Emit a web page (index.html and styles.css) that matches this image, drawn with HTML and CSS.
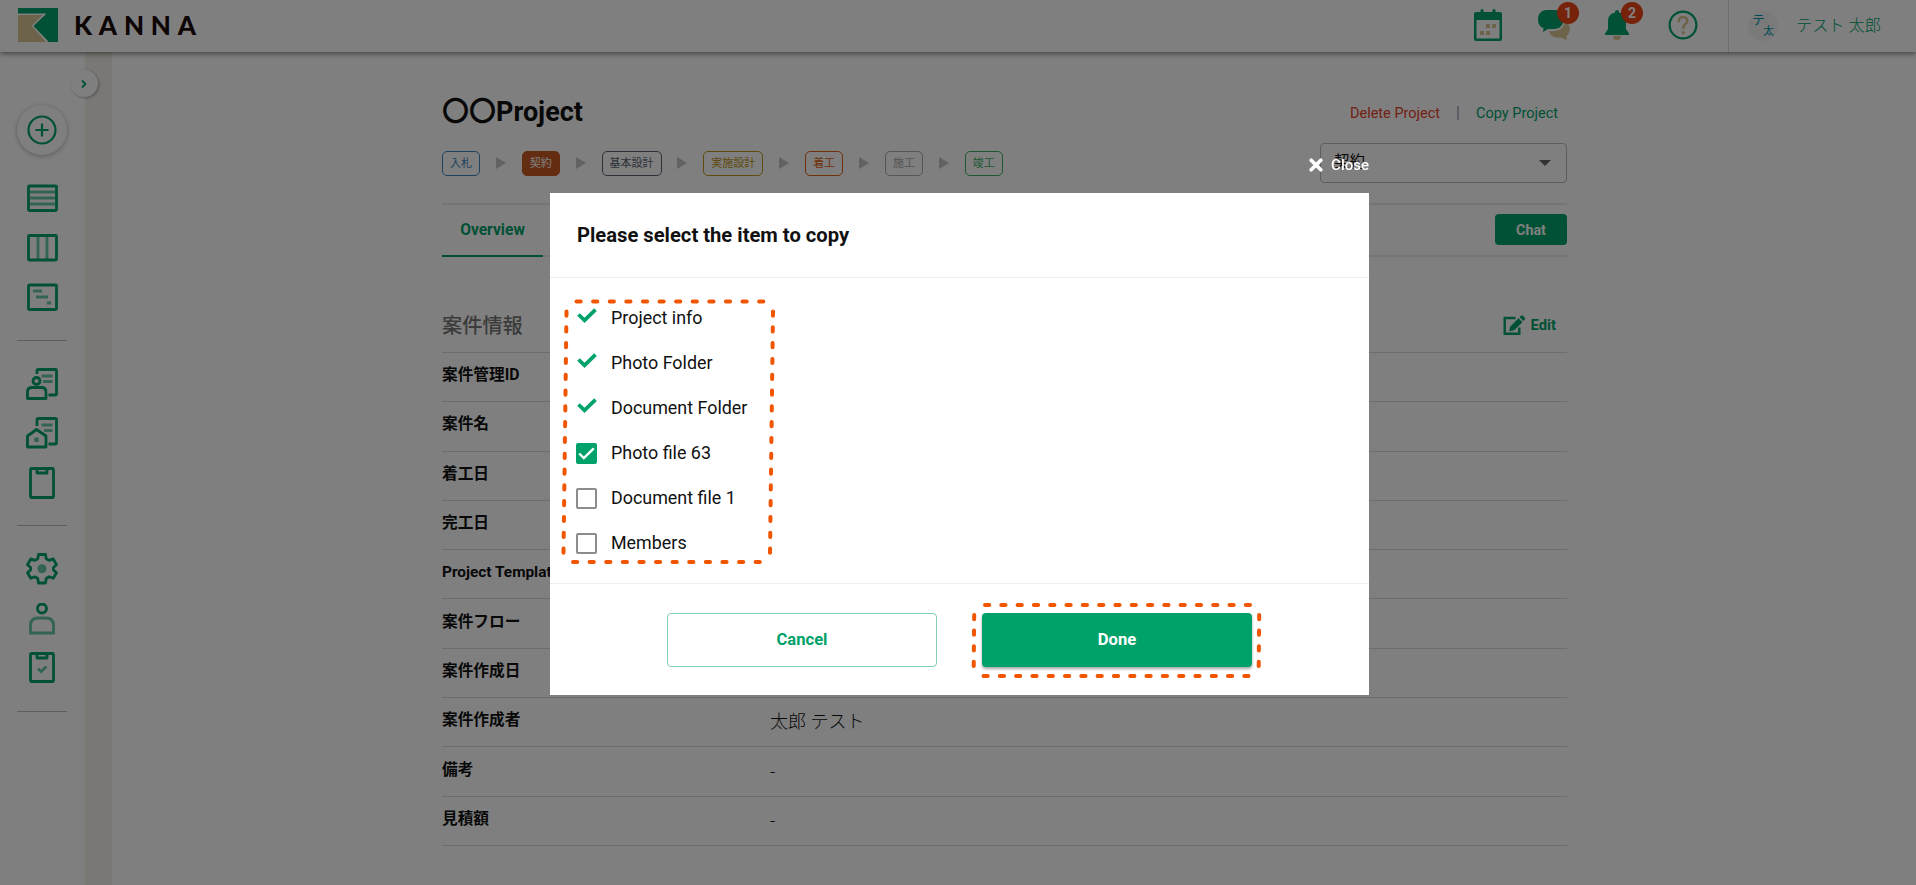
FILE: index.html
```html
<!DOCTYPE html>
<html lang="ja">
<head>
  <meta charset="UTF-8" />
  <meta name="viewport" content="width=device-width, initial-scale=1.0" />
  <title>KANNA</title>
  <link rel="stylesheet" href="styles.css">
</head>
<body>
  <header class="header">
    <svg class="logo-mark" width="40" height="34" viewBox="0 0 40 34">
      <path fill="#00a26a" d="M0 0H40V34H30L15 18 28 6H0z"/>
      <path fill="#dbc796" d="M0 7H25L14 18 28 34H0z"/>
      <path fill="none" stroke="#fff" stroke-width="1.2" d="M0 6.2H26.8L14.5 18 30 34"/>
    </svg>
    <span class="logo-text">KANNA</span>

    <div class="header-icons">
      <div class="header-icon">
        <svg width="32" height="34" viewBox="0 0 32 34">
          <path fill="#00a26a" fill-rule="evenodd" d="M4 3H8.500V1.500A1.500 1.500 0 0 1 11.500 1.500V3H20.500V1.500A1.500 1.500 0 0 1 23.500 1.500V3H28A2 2 0 0 1 30 5V30A2 2 0 0 1 28 32H4A2 2 0 0 1 2 30V5A2 2 0 0 1 4 3zM4.500 11V29.500H27.500V11z"/>
          <path fill="#dbc796" d="M14 15h4v4h-4zM20 15h4v4h-4zM8 22h4v4H8zM14 22h4v4h-4z"/>
        </svg>
      </div>
      <div class="header-icon chats">
        <svg width="34" height="34" viewBox="0 0 34 34">
          <path fill="#dbc796" d="M12 22C22 23 27 19 27.500 13.500C33 14 34 20 32 24C31 26 29.500 26.500 29.500 27L29.500 31L24 28.500C18 29.500 13 27 12 22z"/>
          <path fill="#00a26a" d="M10 1H18C24 1 26.500 5 26.500 10C26.500 16 23 20 17 20H11L6 23L6.500 19C3 18 1 15 1 10.500C1 5 4 1 10 1z"/>
        </svg>
        <span class="badge">1</span>
      </div>
      <div class="header-icon bell">
        <svg width="26" height="34" viewBox="0 0 26 34">
          <path fill="#dbc796" d="M9 27H17A4 4 0 0 1 9 27z"/>
          <path fill="#00a26a" d="M13 1C14.500 1 15 2 15 3.500C20 4.500 22 8 22 13V20L25 24.500V26H1V24.500L4 20V13C4 8 6 4.500 11 3.500C11 2 11.500 1 13 1z"/>
        </svg>
        <span class="badge">2</span>
      </div>
      <div class="header-icon">
        <svg width="30" height="34" viewBox="0 0 30 34">
          <circle cx="15" cy="16" r="13.400" fill="none" stroke="#00a26a" stroke-width="2.200"/>
          <path fill="none" stroke="#dbc796" stroke-width="2.600" stroke-linecap="round" d="M10.800 12.200C11 6.500 19.500 6.700 19.300 12C19.200 15.300 15.200 15 15.200 19"/>
          <circle cx="15.200" cy="23.600" r="1.700" fill="#dbc796"/>
        </svg>
      </div>
    </div>
    <div class="user">
      <span class="avatar"><i>テ</i><i>太</i></span>
      <span class="user-name">テスト 太郎</span>
    </div>
  </header>

  <div class="page">
    <nav class="sidebar">
      <div class="toggle">
        <svg width="8" height="10" viewBox="0 0 8 10"><path fill="none" stroke="#00a26a" stroke-width="1.800" d="M2 1.500L5.500 5L2 8.500"/></svg>
      </div>
      <div class="add">
        <svg width="30" height="30" viewBox="0 0 30 30"><g fill="none" stroke="#00a26a" stroke-width="2.200"><circle cx="15" cy="15" r="13.500"/><path d="M15 8.500V21.500M8.500 15H21.500"/></g></svg>
      </div>
      <div class="nav-group">
        <svg viewBox="0 0 32 32"><rect x="2.500" y="4" width="28" height="24.500" rx="1" class="ln"/><path class="soft" d="M4 10H29M4 16H29M4 22H29"/></svg>
        <svg viewBox="0 0 32 32"><path class="soft" d="M12 4V27M21 4V27"/><rect x="2.500" y="3.500" width="28" height="24.500" rx="1" class="ln"/></svg>
        <svg viewBox="0 0 32 32"><rect x="2.500" y="4" width="28" height="24.500" rx="1" class="ln"/><path class="soft" d="M7 10H16M10 16H22M21 22H25"/></svg>
      </div>
      <div class="nav-group">
        <svg viewBox="0 0 32 32"><path class="ln" d="M11 6V2.500A1 1 0 0 1 12 1.500H29.500A1 1 0 0 1 30.500 2.500V26A1 1 0 0 1 29.500 27H22.500"/><path class="soft" d="M15.500 8H26.500M17 13.500H26.500"/><circle class="ln" cx="10.500" cy="13" r="3.500"/><path class="ln" d="M1.500 30.500V24Q1.500 19.500 6 19.500H15.500Q20 19.500 20 24V30.500z"/></svg>
        <svg viewBox="0 0 32 32"><path class="ln" d="M11 9V2.500A1 1 0 0 1 12 1.500H29.500A1 1 0 0 1 30.500 2.500V26A1 1 0 0 1 29.500 27H22.500"/><path class="soft" d="M15.500 8H26.500M18 13.500H26.500"/><rect x="8.200" y="20.500" width="4.600" height="4.600" rx="1" fill="#00a26a" opacity=".6"/><path class="ln" d="M1.500 30V19L10.500 12.500L20 19V30z"/></svg>
        <svg viewBox="0 0 32 32"><rect class="ln" x="4.500" y="1.500" width="23" height="29" rx="1"/><path class="ln" d="M11 2V6H21V2"/></svg>
      </div>
      <div class="nav-group">
        <svg viewBox="0 0 32 32"><path class="ln" d="M12.500 1.500H19.500L20.200 5.700L23.200 7.400L27.200 5.900L30.500 11.800L27.400 14.500V17L30.500 19.700L27.200 25.300L23.200 23.800L20.200 25.500L19.500 30H12.500L11.800 25.500L8.800 23.800L4.800 25.300L1.500 19.700L4.600 17V14.500L1.500 11.800L4.800 5.900L8.800 7.400L11.800 5.700z"/><circle cx="16" cy="15.700" r="4.500" fill="#00a26a" opacity=".6"/></svg>
        <svg viewBox="0 0 32 32"><circle class="ln" cx="16" cy="5.500" r="4.500"/><path class="soft" d="M4.500 30V22.500Q4.500 15 12 15H20Q27.500 15 27.500 22.500V30z"/></svg>
        <svg viewBox="0 0 32 32"><rect class="ln" x="4.500" y="1.500" width="23" height="28" rx="1"/><path class="ln" d="M11 2V6H21V2"/><path class="soft" d="M12 16.500L15 19.500L20.500 14.500"/></svg>
      </div>
    </nav>
    <div class="strip"></div>

    <main class="content">
      <div class="title-row">
        <h1><span class="circles">〇〇</span>Project</h1>
        <div class="links"><a class="delete">Delete Project</a><span class="bar"></span><a class="copy">Copy Project</a></div>
      </div>
      <div class="flow-row">
        <div class="flow">
          <span class="tag blue">入札</span><i class="arrow"></i>
          <span class="tag current">契約</span><i class="arrow"></i>
          <span class="tag slate">基本設計</span><i class="arrow"></i>
          <span class="tag yellow">実施設計</span><i class="arrow"></i>
          <span class="tag orange">着工</span><i class="arrow"></i>
          <span class="tag gray">施工</span><i class="arrow"></i>
          <span class="tag green">竣工</span>
        </div>
        <div class="select">契約<i class="caret"></i></div>
      </div>
      <div class="tabs">
        <div class="tab">Overview</div>
        <button class="chat">Chat</button>
      </div>
      <div class="section-head">
        <h2>案件情報</h2>
        <div class="edit">
          <svg width="23" height="21" viewBox="0 0 23 21"><path fill="none" stroke="#00a26a" stroke-width="2.400" d="M12.500 3H1.700V18.800H16.300V12.500"/><path fill="#00a26a" d="M6.200 16.300L7.200 11.500L15.500 3.200L19.500 7.200L11.200 15.300zM16.500 2.200L18 .7Q19 0 20 .8L21.700 2.500Q22.600 3.500 21.800 4.600L20.400 6.100z"/></svg>
          Edit
        </div>
      </div>
      <dl class="info">
        <div><dt>案件管理ID</dt><dd></dd></div>
        <div><dt>案件名</dt><dd></dd></div>
        <div><dt>着工日</dt><dd></dd></div>
        <div><dt>完工日</dt><dd></dd></div>
        <div><dt class="latin">Project Template</dt><dd></dd></div>
        <div><dt>案件フロー</dt><dd></dd></div>
        <div><dt>案件作成日</dt><dd></dd></div>
        <div><dt>案件作成者</dt><dd class="name">太郎 テスト</dd></div>
        <div><dt>備考</dt><dd>-</dd></div>
        <div><dt>見積額</dt><dd>-</dd></div>
      </dl>
    </main>
  </div>

  <div class="overlay">
    <div class="modal">
      <div class="close">
        <svg width="14" height="14" viewBox="0 0 14 14"><path stroke="#fff" stroke-width="3.600" stroke-linecap="round" d="M2.200 2.200L11.800 11.800M11.800 2.200L2.200 11.800"/></svg>
        Close
      </div>
      <div class="modal-head">Please select the item to copy</div>
      <div class="modal-body">
        <div class="item"><svg class="check" viewBox="0 0 20 15"><path d="M1.500 6.500L7.500 12.300L18.500 1.700"/></svg>Project info</div>
        <div class="item"><svg class="check" viewBox="0 0 20 15"><path d="M1.500 6.500L7.500 12.300L18.500 1.700"/></svg>Photo Folder</div>
        <div class="item"><svg class="check" viewBox="0 0 20 15"><path d="M1.500 6.500L7.500 12.300L18.500 1.700"/></svg>Document Folder</div>
        <div class="item"><span class="box checked"><svg width="17" height="13" viewBox="0 0 17 13"><path d="M1.200 6.500L5.800 11L15.800 1.300"/></svg></span>Photo file 63</div>
        <div class="item"><span class="box"></span>Document file 1</div>
        <div class="item"><span class="box"></span>Members</div>
        <svg class="marker list-marker" width="216" height="270" viewBox="0 0 216 270">
          <path stroke-dasharray="4.200 12.400" d="M17.500 6.500H206"/>
          <path stroke-dasharray="4.200 11.600" d="M7.500 16.500L4.500 259"/>
          <path stroke-dasharray="4.200 11.600" d="M214 16.500L211 259"/>
          <path stroke-dasharray="4.200 12.400" d="M14 267H203"/>
        </svg>
      </div>
      <div class="modal-foot">
        <button class="btn cancel">Cancel</button>
        <div class="done-wrap">
          <button class="btn done">Done</button>
          <svg class="marker done-marker" width="294" height="80" viewBox="0 0 294 80">
            <path stroke-dasharray="4.200 12.100" d="M16 5H286"/>
            <path stroke-dasharray="4.200 11.400" d="M5.200 15L4.700 68"/>
            <path stroke-dasharray="4.200 11.400" d="M290.200 15L289.700 68"/>
            <path stroke-dasharray="4.200 12.100" d="M14.500 76H286"/>
          </svg>
        </div>
      </div>
    </div>
  </div>
</body>
</html>
```
FILE: styles.css
```css
* {
  box-sizing: border-box;
}
body {
  margin: 0;
  height: 885px;
  overflow: hidden;
  background: #fff;
  color: #111;
  font-family: Roboto, "Noto Sans CJK JP", sans-serif;
}
i {
  font-style: normal;
}
button {
  font-family: inherit;
  padding: 0;
}

/* header */
.header {
  position: relative;
  z-index: 2;
  height: 52px;
  display: flex;
  align-items: center;
  padding-left: 18px;
  background: #fff;
  box-shadow: 0 1px 6px rgba(0,0,0,0.6);
}
.logo-mark {
  margin-bottom: 2px;
}
.logo-text {
  margin-left: 16px;
  margin-bottom: 2px;
  font-family: Lato, sans-serif;
  font-size: 26px;
  font-weight: 900;
  letter-spacing: 6.8px;
  color: #1a0a08;
}
.header-icons {
  margin-left: auto;
  height: 52px;
  display: flex;
  align-items: flex-start;
  padding: 9px 30px 0 0;
  gap: 33px;
}
.header-icon {
  position: relative;
  height: 34px;
}
.header-icon.bell {
  margin-right: 5px;
}
.badge {
  position: absolute;
  top: -7px;
  right: -13px;
  width: 22px;
  height: 22px;
  border-radius: 50%;
  background: #ee4415;
  color: #fff;
  font-size: 14px;
  font-weight: 700;
  line-height: 22px;
  text-align: center;
}
.chats .badge {
  right: -8px;
}
.user {
  width: 188px;
  height: 52px;
  display: flex;
  align-items: center;
  border-left: 1px solid #ddd;
  padding-left: 19px;
  color: #00a26a;
}
.avatar {
  width: 30px;
  height: 30px;
  border-radius: 50%;
  background: #f5f5f5;
  color: #0099a8;
  font-size: 13px;
  line-height: 12px;
  display: flex;
  flex-direction: column;
  padding: 3px 4px;
}
.avatar i + i {
  align-self: flex-end;
  font-size: 11px;
}
.user-name {
  margin-left: 18px;
  padding-bottom: 4px;
  font-size: 16.2px;
  font-weight: 300;
}

/* sidebar */
.page {
  display: flex;
  height: 833px;
}
.sidebar {
  position: relative;
  width: 85px;
  display: flex;
  flex-direction: column;
  align-items: center;
  padding: 53px 1px 0 0;
}
.toggle {
  position: absolute;
  top: 18px;
  right: -13px;
  width: 27px;
  height: 27px;
  padding-right: 2px;
  border-radius: 50%;
  background: #fff;
  box-shadow: 1px 1px 3px rgba(0,0,0,0.3);
  display: flex;
  align-items: center;
  justify-content: center;
}
.add {
  width: 50px;
  height: 50px;
  border-radius: 50%;
  background: #fff;
  box-shadow: 0 1px 5px rgba(0,0,0,0.3);
  display: flex;
  align-items: center;
  justify-content: center;
}
.nav-group {
  width: 50px;
  display: flex;
  flex-direction: column;
  align-items: center;
  gap: 17.5px;
  padding: 27px 0;
  height: 185.7px;
  border-bottom: 1px solid #bbb;
}
.nav-group svg {
  width: 32px;
  height: 32px;
  flex: none;
}
.ln {
  fill: none;
  stroke: #00a26a;
  stroke-width: 2.8;
  stroke-linejoin: round;
}
.soft {
  fill: none;
  stroke: #00a26a;
  stroke-width: 2.8;
  opacity: 0.6;
}
.strip {
  width: 27px;
  background: #f4f0ea;
}

/* project */
.content {
  width: 1125px;
  margin-left: 330px;
}
.title-row {
  display: flex;
  justify-content: space-between;
  align-items: center;
  height: 40px;
  margin-top: 40px;
}
h1 {
  margin: 0;
  font-size: 27px;
  font-weight: 700;
  display: flex;
  align-items: center;
}
.circles {
  margin-bottom: 6px;
  font-weight: 700;
}
.links {
  display: flex;
  align-items: center;
  padding: 2px 9px 0 0;
  font-size: 14.5px;
}
.bar {
  width: 2px;
  height: 14px;
  margin: 0 17px;
  background: #bbc;
}
.delete {
  color: #e8402a;
}
.copy {
  color: #00a26a;
}
.flow-row {
  display: flex;
  justify-content: space-between;
  align-items: center;
  height: 40px;
  margin-top: 11px;
}
.flow {
  display: flex;
  align-items: center;
  margin-top: 25px;
  margin-bottom: 25px;
}
.tag {
  height: 25px;
  border: 1px solid;
  border-radius: 5px;
  padding: 0 7px;
  font-size: 11px;
  line-height: 23px;
}
.arrow {
  margin: 0 15.9px;
  border-left: 10px solid #c4c4c4;
  border-top: 6px solid transparent;
  border-bottom: 6px solid transparent;
}
.blue {
  color: #3c86bc;
}
.current {
  color: #fff;
  background: #c85820;
  border-color: #c85820;
}
.slate {
  color: #5a6272;
}
.yellow {
  color: #c09418;
}
.orange {
  color: #e06010;
}
.gray {
  color: #aaa;
}
.green {
  color: #3cae68;
}
.select {
  width: 247px;
  height: 40px;
  border: 1px solid #bbb;
  border-radius: 4px;
  display: flex;
  justify-content: space-between;
  align-items: center;
  padding: 0 15px 6px 13px;
  font-size: 15.4px;
}
.caret {
  margin-top: 6px;
  border-top: 6px solid #666;
  border-left: 6px solid transparent;
  border-right: 6px solid transparent;
}
.tabs {
  display: flex;
  justify-content: space-between;
  height: 54px;
  margin-top: 20px;
  border-top: 2px solid #eaeaea;
  border-bottom: 2px solid #eaeaea;
}
.tab {
  width: 101px;
  height: 52px;
  border-bottom: 2px solid #00a26a;
  color: #00a26a;
  font-size: 15.6px;
  font-weight: 700;
  line-height: 50px;
  text-align: center;
}
.chat {
  width: 72px;
  height: 31px;
  margin-top: 9px;
  border: none;
  border-radius: 4px;
  background: #00a26a;
  color: #fff;
  font-size: 14.3px;
  font-weight: 700;
}
.section-head {
  display: flex;
  justify-content: space-between;
  align-items: center;
  height: 55px;
  margin-top: 40px;
  padding-right: 11px;
}
h2 {
  margin: 0;
  color: #777;
  font-size: 20.2px;
  font-weight: 500;
}
.edit {
  display: flex;
  align-items: center;
  gap: 5px;
  color: #00a26a;
  font-size: 14.8px;
  font-weight: 700;
  padding-top: 1px;
}
.info {
  margin: 0;
  border-top: 1px solid #d8d8d8;
}
.info div {
  display: flex;
  align-items: center;
  height: 49.3px;
  border-bottom: 1px solid #d8d8d8;
}
.info dt {
  width: 328px;
  padding-bottom: 7px;
  font-size: 15.7px;
  font-weight: 700;
}
.info dt.latin {
  padding-bottom: 5px;
  font-size: 15.4px;
}
.info dd {
  margin: 0;
  font-size: 18px;
  font-weight: 300;
}
.info dd.name {
  padding-bottom: 4px;
}

/* copy dialog */
.overlay {
  position: fixed;
  inset: 0;
  z-index: 10;
  background: rgba(0,0,0,0.5);
  display: flex;
  justify-content: center;
  align-items: flex-start;
  padding: 193px 0 0 3px;
}
.modal {
  position: relative;
  width: 819px;
  height: 502px;
  background: #fff;
}
.close {
  position: absolute;
  right: 0;
  top: -37px;
  display: flex;
  align-items: center;
  gap: 8px;
  color: #fff;
  font-size: 15px;
  font-weight: 500;
}
.modal-head {
  height: 85px;
  padding-left: 27px;
  border-bottom: 1px solid #eee;
  font-size: 20.2px;
  font-weight: 700;
  line-height: 85px;
}
.modal-body {
  position: relative;
  height: 306px;
  padding: 17px 26px;
  border-bottom: 1px solid #eee;
}
.item {
  display: flex;
  align-items: center;
  height: 45px;
  font-size: 17.9px;
  font-weight: 400;
  gap: 14px;
}
.check {
  width: 20px;
  height: 15px;
  margin: 0 0 5px 1px;
  fill: none;
  stroke: #00a26a;
  stroke-width: 3.8;
}
.box {
  width: 21px;
  height: 21px;
  margin-top: 1px;
  border: 2px solid #8c8c8c;
  border-radius: 2px;
}
.box.checked {
  border: none;
  background: #00a26a;
  display: flex;
  align-items: center;
  justify-content: center;
}
.box svg {
  fill: none;
  stroke: #fff;
  stroke-width: 2.4;
}
.modal-foot {
  display: flex;
  justify-content: center;
  gap: 45px;
  padding-top: 29px;
}
.btn {
  width: 270px;
  height: 54px;
  border: none;
  border-radius: 4px;
  padding-bottom: 2px;
  font-size: 16.6px;
  font-weight: 700;
}
.cancel {
  background: #fff;
  border: 1px solid #80d0b4;
  color: #00a26a;
}
.done-wrap {
  position: relative;
}
.done {
  background: #00a26a;
  color: #fff;
  box-shadow: 0 2px 3px rgba(0,0,0,0.35);
}

/* orange dashed markers */
.marker {
  position: absolute;
  fill: none;
  stroke: #f25500;
  stroke-width: 4;
  stroke-linecap: round;
}
.list-marker {
  left: 9px;
  top: 17px;
}
.done-marker {
  left: -13px;
  top: -13px;
}
```
